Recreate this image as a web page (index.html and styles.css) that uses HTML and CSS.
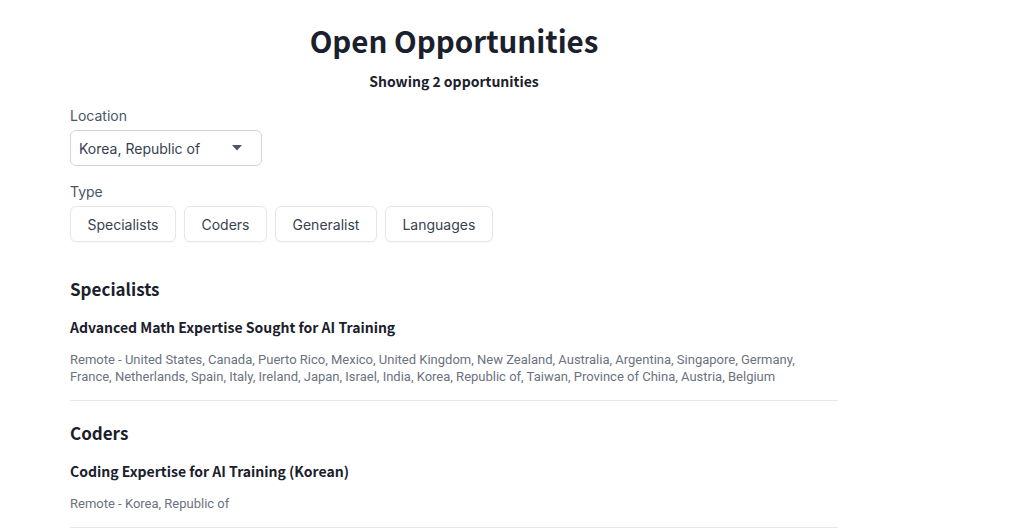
FILE: index.html
```html
<!DOCTYPE html>
<html lang="en">
<head>
<meta charset="utf-8">
<title>Open Opportunities</title>
<link rel="stylesheet" href="styles.css">
</head>
<body>
<main class="page">
  <header class="head">
    <h1 class="title">Open Opportunities</h1>
    <p class="count">Showing 2 opportunities</p>
  </header>

  <section class="filters">
    <div class="field">
      <label class="label">Location</label>
      <div class="select">
        <span class="select-value">Korea, Republic of</span>
        <svg class="caret" width="10" height="6" viewBox="0 0 10 6"><path d="M0 0H10L5 5.5Z" fill="#4b5563"/></svg>
      </div>
    </div>
    <div class="field">
      <span class="label">Type</span>
      <div class="chips">
        <button class="chip">Specialists</button>
        <button class="chip">Coders</button>
        <button class="chip">Generalist</button>
        <button class="chip">Languages</button>
      </div>
    </div>
  </section>

  <section class="group">
    <h2 class="group-title">Specialists</h2>
    <article class="job">
      <h3 class="job-title">Advanced Math Expertise Sought for AI Training</h3>
      <p class="job-loc">Remote - United States, Canada, Puerto Rico, Mexico, United Kingdom, New Zealand, Australia, Argentina, Singapore, Germany, France, Netherlands, Spain, Italy, Ireland, Japan, Israel, India, Korea, Republic of, Taiwan, Province of China, Austria, Belgium</p>
    </article>
  </section>

  <section class="group">
    <h2 class="group-title">Coders</h2>
    <article class="job">
      <h3 class="job-title">Coding Expertise for AI Training (Korean)</h3>
      <p class="job-loc">Remote - Korea, Republic of</p>
    </article>
  </section>
</main>
</body>
</html>
```

FILE: styles.css
```css
* { box-sizing: border-box; }
html, body { margin: 0; padding: 0; background: #fff; }
body { font-family: Inter, "Noto Sans", sans-serif; color: #1a202c; }

.page {
  width: 768px;
  margin-left: 70px;
  padding-top: 20px;
}

.head { text-align: center; }
.title {
  margin: 0;
  font-family: "Noto Sans CJK KR", "Noto Sans", sans-serif;
  font-weight: 700;
  font-size: 29.5px;
  line-height: 40px;
  color: #1a202c;
}
.count {
  margin: 11px 0 0;
  font-family: "Noto Sans CJK KR", "Noto Sans", sans-serif;
  font-weight: 700;
  font-size: 14px;
  line-height: 20px;
  color: #1a202c;
}

.filters { margin-top: 15px; display: flex; flex-direction: column; gap: 16px; }
.field { display: flex; flex-direction: column; gap: 4px; }
.label {
  font-size: 14px;
  line-height: 20px;
  color: #4b5563;
}
.select {
  width: 192px;
  height: 36px;
  border: 1px solid #d1d5db;
  border-radius: 6px;
  display: flex;
  align-items: center;
  justify-content: space-between;
  padding: 0 19px 0 8px;
  font-size: 14px;
  color: #374151;
}
.chips { display: flex; gap: 8px; }
.chip {
  height: 36px;
  padding: 0 16.5px;
  border: 1px solid #e5e7eb;
  border-radius: 6px;
  background: #fff;
  font-family: Inter, "Noto Sans", sans-serif;
  font-size: 14px;
  color: #374151;
  box-shadow: 0 1px 2px rgba(0,0,0,0.04);
}

.group { margin-top: 33px; }
.group + .group { margin-top: 18px; }
.group-title {
  margin: 0;
  font-family: "Noto Sans CJK KR", "Noto Sans", sans-serif;
  font-weight: 700;
  font-size: 17px;
  line-height: 28px;
  color: #1a202c;
}
.job {
  padding: 14px 0 15px;
  border-bottom: 1px solid #e5e7eb;
}
.job-title {
  margin: 0;
  font-family: "Noto Sans CJK KR", "Noto Sans", sans-serif;
  font-weight: 700;
  font-size: 14px;
  line-height: 20px;
  color: #1a202c;
}
.job-loc {
  margin: 14px 0 0;
  font-family: Roboto, "Noto Sans", sans-serif;
  font-size: 13px;
  line-height: 17px;
  color: #6b7280;
}
```
